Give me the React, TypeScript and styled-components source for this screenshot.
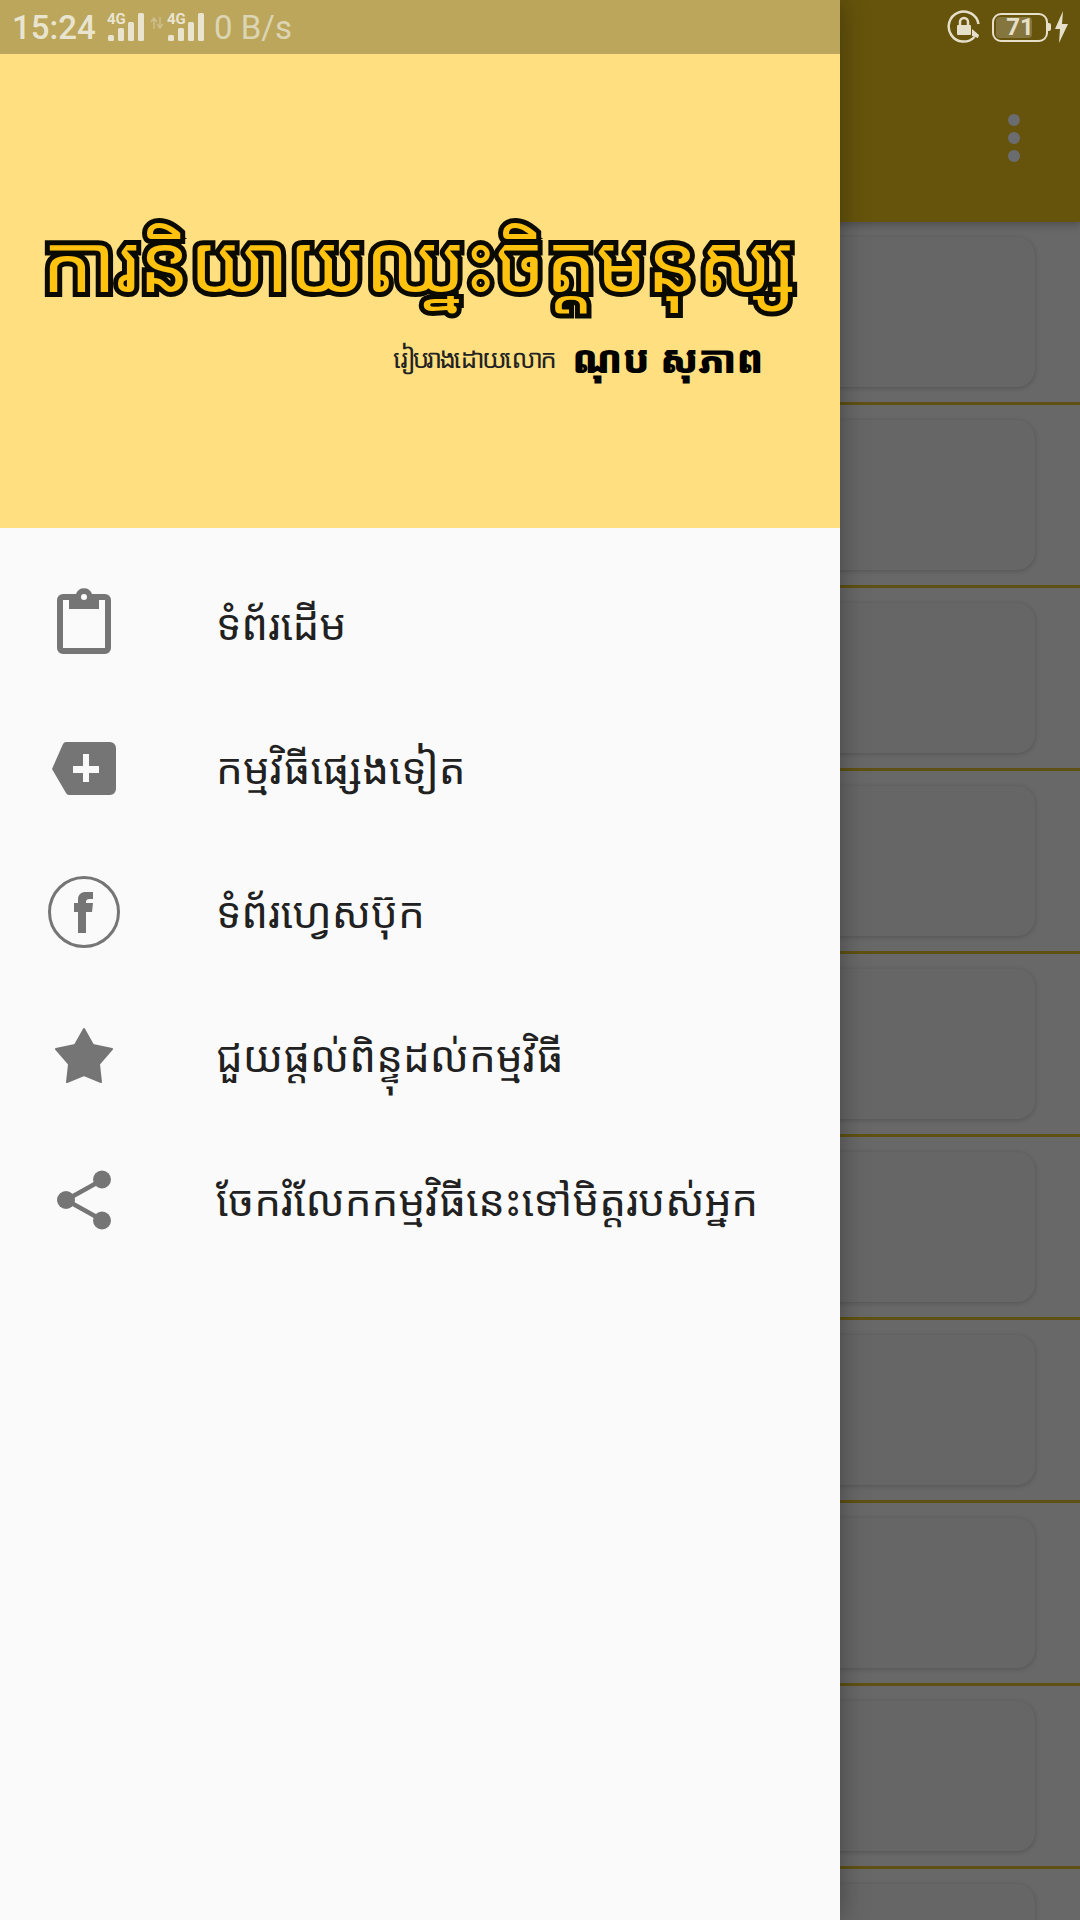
import { FC, type ReactElement } from "react"
import styled, { createGlobalStyle } from "styled-components"

const rowKeys = [0, 1, 2, 3, 4, 5, 6, 7, 8, 9]

const ClipboardIcon = (): ReactElement => (
  <svg width="54" height="72" viewBox="0 0 54 72">
    <path
      fill="#757575"
      d="M6 6h13a8.500 8.500 0 0 1 16 0h13a6 6 0 0 1 6 6v48a6 6 0 0 1-6 6H6a6 6 0 0 1-6-6V12a6 6 0 0 1 6-6zM6 12v48h42V12h-6v9H12v-9z"
      fillRule="evenodd"
    />
    <circle cx="27" cy="9" r="3" fill="#fafafa" />
  </svg>
)

const TagPlusIcon = (): ReactElement => (
  <svg width="64" height="53" viewBox="0 0 64 53">
    <path
      fill="#757575"
      d="M11 2a4 4 0 0 1 3-2h44a6 6 0 0 1 6 6v41a6 6 0 0 1-6 6H17a4 4 0 0 1-3-2L0 27z"
    />
    <path fill="#fafafa" d="M31 12h6v12h10v7H37v9h-6v-9H21v-7h10z" />
  </svg>
)

const FacebookIcon = (): ReactElement => (
  <svg width="72" height="72" viewBox="0 0 72 72">
    <circle cx="36" cy="36" r="34.500" fill="none" stroke="#757575" strokeWidth="3" />
    <path
      fill="#757575"
      d="M30 57V36h-4v-9h4v-3.500C30 18.500 33 16 38 16h7v7h-3.500c-2.500 0-3.500 1-3.500 3v1h7l-1 9h-6v21z"
    />
  </svg>
)

const StarIcon = (): ReactElement => (
  <StarSvg width="60" height="58" viewBox="0 0 60 58">
    <path
      fill="#757575"
      stroke="#757575"
      strokeWidth="2"
      strokeLinejoin="round"
      d="M30 2l9 16 19 4-13 15 2 18-17-7-17 7 2-18L2 22l19-4z"
    />
  </StarSvg>
)

const ShareIcon = (): ReactElement => (
  <svg width="54" height="60" viewBox="0 0 54 60">
    <path d="M45 10L9 30l36 20" fill="none" stroke="#757575" strokeWidth="4.500" />
    <circle cx="45" cy="9.500" r="9" fill="#757575" />
    <circle cx="9" cy="30" r="9" fill="#757575" />
    <circle cx="45" cy="50.500" r="9" fill="#757575" />
  </svg>
)

const SignalIcon = (): ReactElement => (
  <svg width="38" height="34" viewBox="0 0 38 34">
    <text x="0" y="14" fontFamily="Roboto, sans-serif" fontWeight="700" fontSize="15" fill="#e9e4cf">
      4G
    </text>
    <rect x="1" y="25" width="6" height="6" rx="1.500" fill="#e9e4cf" />
    <rect x="11" y="18" width="6" height="13" rx="1.500" fill="#e9e4cf" />
    <rect x="21" y="12" width="6" height="19" rx="1.500" fill="#e9e4cf" />
    <rect x="31" y="3" width="6" height="28" rx="1.500" fill="#e9e4cf" />
  </svg>
)

const DataArrows = (): ReactElement => (
  <ArrowsSvg width="14" height="12" viewBox="0 0 14 12">
    <path d="M4 12V2M1 5l3-4 3 4M10 0v10M7 7l3 4 3-4" fill="none" stroke="#cdbf8b" strokeWidth="1.500" />
  </ArrowsSvg>
)

const RotationLockIcon = (): ReactElement => (
  <svg width="34" height="34" viewBox="0 0 34 34">
    <path
      d="M27.500 27A15 15 0 1 1 31.500 14"
      fill="none"
      stroke="#e6e0ca"
      strokeWidth="2.500"
    />
    <path d="M25 19l7 6-1 3-6-2z" fill="#e6e0ca" />
    <rect x="10" y="15" width="14" height="10" rx="1" fill="#e6e0ca" />
    <path d="M13 15v-3a4 4 0 0 1 8 0v3" fill="none" stroke="#e6e0ca" strokeWidth="2.500" />
  </svg>
)

const BoltIcon = (): ReactElement => (
  <svg width="13" height="32" viewBox="0 0 13 32">
    <path d="M8 0L0 18h5l-1 14 9-19H7z" fill="#e6e0ca" />
  </svg>
)

const menuItems: { label: string; icon: ReactElement }[] = [
  { label: "ទំព័រដើម", icon: <ClipboardIcon /> },
  { label: "កម្មវិធីផ្សេងទៀត", icon: <TagPlusIcon /> },
  { label: "ទំព័រហ្វេសប៊ុក", icon: <FacebookIcon /> },
  { label: "ជួយផ្តល់ពិន្ទុដល់កម្មវិធី", icon: <StarIcon /> },
  { label: "ចែករំលែកកម្មវិធីនេះទៅមិត្តរបស់អ្នក", icon: <ShareIcon /> },
]

const App: FC = (): ReactElement => {
  return (
    <Screen>
      <GlobalStyle />

      <Page>
        <AppBar>
          <SystemIcons>
            <RotationLockIcon />
            <Battery>
              <BatteryLevel />
              <BatteryText>71</BatteryText>
            </Battery>
            <BatteryTip />
            <BoltIcon />
          </SystemIcons>
          <OverflowMenu>
            <Dot />
            <Dot />
            <Dot />
          </OverflowMenu>
        </AppBar>

        {rowKeys.map((key) => (
          <ListRow key={key}>
            <Card />
          </ListRow>
        ))}
      </Page>

      <Drawer>
        <StatusStrip>
          <Clock>15:24</Clock>
          <SignalIcon />
          <DataArrows />
          <SignalIcon />
          <NetSpeed>0 B/s</NetSpeed>
        </StatusStrip>

        <DrawerHeader>
          <BookTitle>ការនិយាយឈ្នះចិត្តមនុស្ស</BookTitle>
          <Byline>
            <BylineLabel>រៀបរាងដោយលោក</BylineLabel>
            <BylineName>ណុប សុភាព</BylineName>
          </Byline>
        </DrawerHeader>

        <Menu>
          {menuItems.map(({ label, icon }) => (
            <MenuRow key={label}>
              <MenuIcon>{icon}</MenuIcon>
              <MenuLabel>{label}</MenuLabel>
            </MenuRow>
          ))}
        </Menu>
      </Drawer>
    </Screen>
  )
}

export default App

const GlobalStyle = createGlobalStyle`
  html, body {
    margin: 0;
    padding: 0;
    background: #666;
  }
`

const khmerStack = `"Noto Sans Khmer", "Khmer OS", "Noto Sans", Roboto, sans-serif`

const Screen = styled.div`
  position: relative;
  width: 1080px;
  height: 1920px;
  overflow: hidden;
  background: #686868;
  font-family: ${khmerStack};
`

const Page = styled.div`
  display: flex;
  flex-direction: column;
`

const AppBar = styled.div`
  height: 222px;
  flex-shrink: 0;
  background: #66540c;
  display: flex;
  flex-direction: column;
  align-items: flex-end;
  box-shadow: 0 3px 8px rgba(0, 0, 0, 0.25);
  position: relative;
  z-index: 1;
`

const SystemIcons = styled.div`
  height: 54px;
  display: flex;
  align-items: center;
  padding-right: 12px;
`

const Battery = styled.div`
  position: relative;
  width: 56px;
  height: 29px;
  margin-left: 11px;
  border: 2.5px solid #e6e0ca;
  border-radius: 9px;
  box-sizing: border-box;
  display: flex;
  align-items: center;
  justify-content: center;
`

const BatteryLevel = styled.div`
  position: absolute;
  left: 2px;
  top: 2px;
  bottom: 2px;
  width: 36px;
  border-radius: 4px;
  background: #857640;
`

const BatteryText = styled.span`
  position: relative;
  font-family: Roboto, sans-serif;
  font-weight: 700;
  font-size: 24px;
  line-height: 24px;
  color: #e6e0ca;
`

const BatteryTip = styled.div`
  width: 3px;
  height: 8px;
  margin: 0 4px 0 0;
  background: #e6e0ca;
  border-radius: 0 2px 2px 0;
`

const OverflowMenu = styled.div`
  display: flex;
  flex-direction: column;
  gap: 6px;
  padding: 60px 60px 0 0;
`

const Dot = styled.div`
  width: 12px;
  height: 12px;
  border-radius: 50%;
  background: #6b6c70;
`

const ListRow = styled.div`
  flex-shrink: 0;
  padding: 15px 45px;
  border-bottom: 3px solid #5f5113;
`

const Card = styled.div`
  height: 150px;
  border-radius: 18px;
  background: #666;
  box-shadow: 0 1px 5px rgba(0, 0, 0, 0.2);
`

const Drawer = styled.div`
  position: absolute;
  left: 0;
  top: 0;
  bottom: 0;
  width: 840px;
  z-index: 2;
  background: #fafafa;
  display: flex;
  flex-direction: column;
  box-shadow: 0 0 26px rgba(0, 0, 0, 0.35);
`

const StatusStrip = styled.div`
  height: 54px;
  flex-shrink: 0;
  background: #bba65c;
  display: flex;
  align-items: center;
  padding-left: 12px;
  font-family: Roboto, sans-serif;
`

const Clock = styled.span`
  width: 95px;
  font-size: 33px;
  font-weight: 500;
  color: #e9e4cf;
`

const ArrowsSvg = styled.svg`
  margin: 0 3px 8px 5px;
`

const NetSpeed = styled.span`
  font-size: 33px;
  color: #dcd5b4;
  margin-left: 9px;
`

const DrawerHeader = styled.div`
  height: 474px;
  flex-shrink: 0;
  background: #ffdf80;
  display: flex;
  flex-direction: column;
  align-items: flex-start;
  padding: 147px 0 0 42px;
  box-sizing: border-box;
`

const BookTitle = styled.div`
  font-size: 80px;
  line-height: 120px;
  font-weight: 400;
  white-space: nowrap;
  color: #ffc20e;
  -webkit-text-stroke: 10px #0a0a00;
  stroke-linejoin: round;
  paint-order: stroke fill;
`

const Byline = styled.div`
  display: flex;
  align-items: center;
  gap: 18px;
  margin: 11px 0 0 351px;
`

const BylineLabel = styled.span`
  font-size: 26px;
  letter-spacing: -2.800px;
  color: #222;
`

const BylineName = styled.span`
  font-size: 38.500px;
  font-weight: 900;
  color: #000;
`

const Menu = styled.div`
  display: flex;
  flex-direction: column;
  padding-top: 24px;
`

const MenuRow = styled.div`
  height: 144px;
  display: flex;
  align-items: center;
`

const MenuIcon = styled.div`
  width: 216px;
  padding-right: 48px;
  box-sizing: border-box;
  flex-shrink: 0;
  display: flex;
  justify-content: center;
`

const MenuLabel = styled.span`
  font-size: 42.300px;
  padding-bottom: 2px;
  color: #212121;
  white-space: nowrap;
`

const StarSvg = styled.svg`
  filter: blur(0.7px);
`
